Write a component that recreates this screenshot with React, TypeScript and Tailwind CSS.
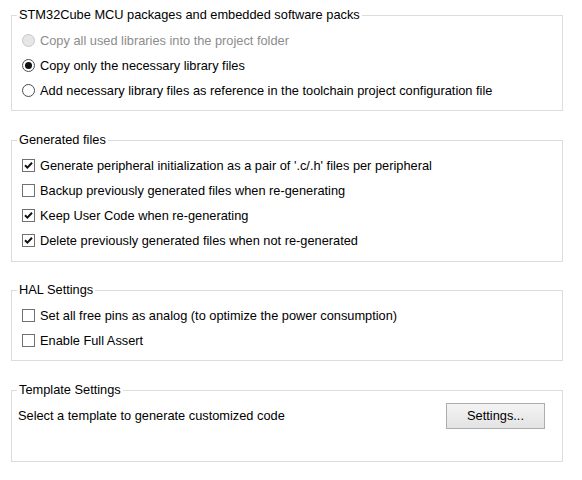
import type { ReactNode } from "react";

const font = { fontFamily: '"Liberation Sans", Arial, sans-serif' };

function Radio({ checked, disabled }: { checked?: boolean; disabled?: boolean }) {
  return (
    <span
      className={
        "flex h-[13px] w-[13px] shrink-0 items-center justify-center rounded-full border " +
        (disabled ? "border-[#c6c6c6] bg-[#e6e6e6]" : "border-[#4d4d4d] bg-white")
      }
    >
      {checked && <span className="h-[7px] w-[7px] rounded-full bg-[#111]" />}
    </span>
  );
}

function Check({ checked }: { checked?: boolean }) {
  return (
    <span className="flex h-[13px] w-[13px] shrink-0 items-center justify-center border border-[#707070] bg-white">
      {checked && (
        <svg width="9" height="9" viewBox="0 0 9 9">
          <path d="M1 4.2 L3.4 6.6 L8 1.8" fill="none" stroke="#111" strokeWidth="2" />
        </svg>
      )}
    </span>
  );
}

function Row({ icon, children, muted }: { icon: ReactNode; children: ReactNode; muted?: boolean }) {
  return (
    <div className={"flex h-[25px] items-center gap-[5px] pl-[10px] " + (muted ? "text-[#8c8c8c]" : "text-black")}>
      {icon}
      <span>{children}</span>
    </div>
  );
}

function Group({ title, children, className }: { title: string; children: ReactNode; className?: string }) {
  return (
    <fieldset className={"w-[552px] border border-[#dcdcdc] " + (className ?? "")}>
      <legend className="ml-[5px] px-[2px] leading-[14px]">{title}</legend>
      {children}
    </fieldset>
  );
}

export default function App() {
  return (
    <div className="min-h-[480px] bg-white pl-[11px] pt-[8px] text-[12.8px] text-black" style={font}>
      <Group title="STM32Cube MCU packages and embedded software packs" className="pt-[6px] pb-[7px]">
        <Row icon={<Radio disabled />} muted>
          Copy all used libraries into the project folder
        </Row>
        <Row icon={<Radio checked />}>Copy only the necessary library files</Row>
        <Row icon={<Radio />}>Add necessary library files as reference in the toolchain project configuration file</Row>
      </Group>

      <Group title="Generated files" className="mt-[22px] pt-[6px] pb-[8px]">
        <Row icon={<Check checked />}>Generate peripheral initialization as a pair of '.c/.h' files per peripheral</Row>
        <Row icon={<Check />}>Backup previously generated files when re-generating</Row>
        <Row icon={<Check checked />}>Keep User Code when re-generating</Row>
        <Row icon={<Check checked />}>Delete previously generated files when not re-generated</Row>
      </Group>

      <Group title="HAL Settings" className="mt-[21px] pt-[6px] pb-[7px]">
        <Row icon={<Check />}>Set all free pins as analog (to optimize the power consumption)</Row>
        <Row icon={<Check />}>Enable Full Assert</Row>
      </Group>

      <Group title="Template Settings" className="mt-[22px] pt-[6px] pb-[32px]">
        <div className="flex items-center justify-between pl-[6px] pr-[17px]">
          <span>Select a template to generate customized code</span>
          <button className="h-[26px] w-[99px] border border-[#adadad] bg-gradient-to-b from-[#f4f4f4] to-[#e3e3e3] text-black">
            Settings...
          </button>
        </div>
      </Group>
    </div>
  );
}
